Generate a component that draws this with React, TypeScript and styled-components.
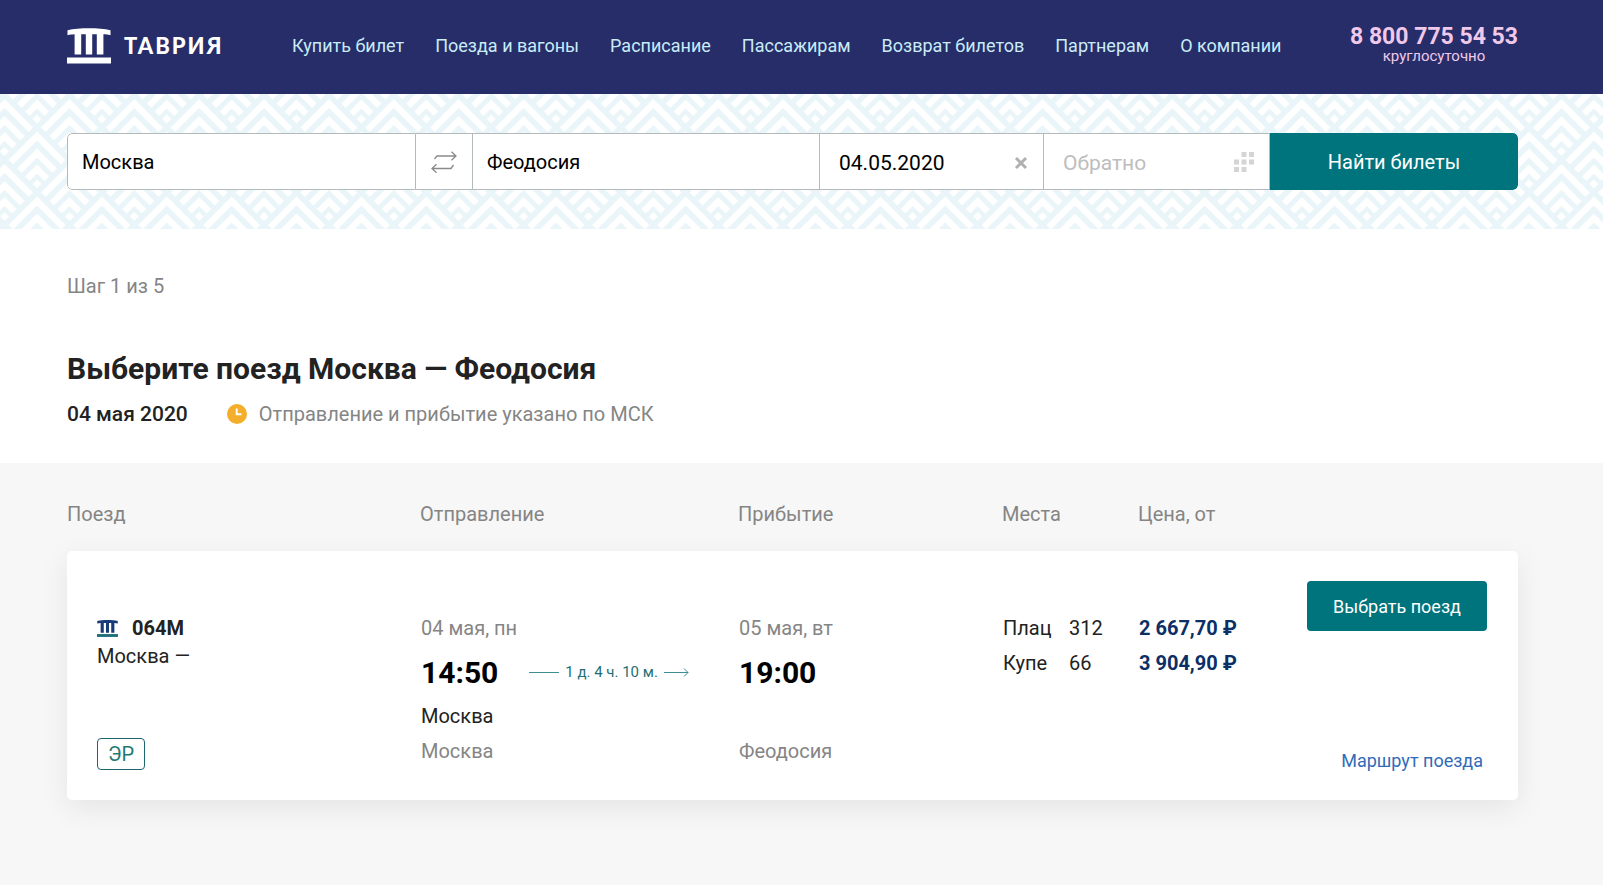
import React, { useId } from "react";
import styled, { createGlobalStyle } from "styled-components";

const GlobalStyle = createGlobalStyle`
  *, *::before, *::after { box-sizing: border-box; }
  html, body { margin: 0; background: #f7f7f7; }
  body { font-family: Roboto, "Liberation Sans", sans-serif; font-size: 20px; color: #222; }
  button, input { font-family: inherit; }
  a { text-decoration: none; }
`;

const teal = "#00747d";
const grey = "#858585";
const gutter = "padding-left: 67px; padding-right: 85px;";

/* ---------- header ---------- */

const Header = styled.header`
  ${gutter}
  display: flex;
  align-items: center;
  justify-content: space-between;
  height: 94px;
  padding-bottom: 3px;
  background: #262d69;
`;

const Brand = styled.a`
  display: flex;
  align-items: center;
  gap: 13px;
  color: #fff;
  font-family: Lato, Roboto, sans-serif;
  font-size: 22px;
  font-weight: 900;
  line-height: 36px;
  letter-spacing: 2px;
`;

const Nav = styled.nav`
  display: flex;
  gap: 31px;
`;

const NavLink = styled.a`
  color: #c9ecf8;
  font-size: 18px;
  line-height: 24px;
  white-space: nowrap;
`;

const Phone = styled.a`
  display: flex;
  flex-direction: column;
  align-items: center;
  margin-bottom: 4px;
  color: #f0c9ea;
  white-space: nowrap;
`;

const PhoneNumber = styled.span`
  font-size: 23px;
  font-weight: 700;
  line-height: 24px;
`;

const PhoneNote = styled.span`
  font-size: 15px;
  line-height: 14px;
`;

/* ---------- search ---------- */

const SearchBand = styled.section`
  ${gutter}
  position: relative;
  padding-top: 39px;
  padding-bottom: 39px;
  background: #fff;
`;

const Ornament = styled.svg`
  position: absolute;
  inset: 0;
  width: 100%;
  height: 100%;
`;

const SearchForm = styled.form`
  position: relative;
  display: grid;
  grid-template-columns: 349fr 57px 347fr 224fr 226fr 248fr;
  height: 57px;
  border-radius: 5px;
  background: #fff;
  overflow: hidden;
`;

const Field = styled.label<{ $first?: boolean; $inset: number }>`
  display: flex;
  align-items: center;
  min-width: 0;
  padding: 0 15px 0 ${(p) => p.$inset}px;
  border: 1px solid #b4bab9;
  border-left-width: ${(p) => (p.$first ? 1 : 0)}px;
  border-radius: ${(p) => (p.$first ? "5px 0 0 5px" : "0")};
`;

const TextInput = styled.input`
  flex: 1;
  min-width: 0;
  padding: 0;
  border: 0;
  outline: 0;
  background: transparent;
  color: #000;
  font-size: 20px;
  line-height: 28px;
  &::placeholder { color: #bdbdbd; opacity: 1; }
`;

const DateInput = styled(TextInput)`
  padding-top: 2px;
  font-size: 21px;
`;

const IconButton = styled.button`
  display: flex;
  align-items: center;
  justify-content: center;
  padding: 0;
  border: 0;
  background: transparent;
  cursor: pointer;
`;

const ClearButton = styled(IconButton)`
  padding-top: 2px;
`;

const SwapButton = styled(IconButton)`
  border: 1px solid #b4bab9;
  border-left: 0;
`;

const SearchButton = styled.button`
  border: 0;
  border-radius: 0 5px 5px 0;
  background: ${teal};
  color: #fff;
  font-size: 20px;
  cursor: pointer;
`;

/* ---------- intro ---------- */

const Intro = styled.section`
  ${gutter}
  padding-top: 43px;
  padding-bottom: 35px;
  background: #fff;
`;

const Step = styled.p`
  margin: 0 0 48px;
  color: ${grey};
  line-height: 28px;
`;

const Title = styled.h1`
  margin: 0 0 10px;
  font-size: 30px;
  font-weight: 700;
  line-height: 42px;
`;

const Summary = styled.div`
  display: flex;
  align-items: center;
  line-height: 28px;
`;

const TravelDate = styled.span`
  margin-right: 39px;
  font-size: 21px;
  font-weight: 500;
`;

const ZoneNote = styled.span`
  display: flex;
  align-items: center;
  gap: 12px;
  color: ${grey};
`;

/* ---------- results ---------- */

const Results = styled.section`
  ${gutter}
  padding-top: 24px;
  padding-bottom: 80px;
`;

const Table = styled.table`
  display: block;
`;

const TableHead = styled.thead`
  display: block;
`;

const TableBody = styled.tbody`
  display: block;
`;

const columns = "grid-template-columns: 353fr 318fr 264fr 136fr 380fr;";

const HeadRow = styled.tr`
  display: grid;
  ${columns}
  padding: 13px 0 23px;
`;

const HeadCell = styled.th`
  padding: 0;
  color: ${grey};
  font-weight: 400;
  line-height: 28px;
  text-align: left;
`;

const TrainRow = styled.tr`
  display: grid;
  ${columns}
  min-height: 249px;
  border-radius: 5px;
  background: #fff;
  box-shadow: 0 8px 30px rgba(0, 0, 0, 0.08);
`;

const Cell = styled.td`
  padding: 60px 0 30px 1px;
  line-height: 35px;
`;

const TrainCell = styled(Cell)`
  display: flex;
  flex-direction: column;
  align-items: flex-start;
  padding-left: 30px;
`;

const TrainName = styled.div`
  display: flex;
  align-items: center;
  gap: 14px;
  font-weight: 700;
`;

const TrainRoute = styled.div`
  line-height: 20px;
`;

const Badge = styled.span`
  margin-top: auto;
  padding: 0 10px;
  border: 1px solid #1b6670;
  border-radius: 4px;
  color: #1f7a72;
  line-height: 30px;
`;

const Muted = styled.div`
  color: ${grey};
`;

const TimeLine = styled.div`
  display: flex;
  align-items: center;
  height: 53px;
`;

const Time = styled.time`
  color: #000;
  font-size: 30px;
  font-weight: 700;
`;

const Duration = styled.span`
  display: flex;
  align-items: center;
  gap: 6px;
  margin-left: 31px;
  color: #1f6f75;
  font-size: 15px;
  white-space: nowrap;
`;

const Station = styled.div`
  min-height: 35px;
`;

const SeatLine = styled.div`
  display: flex;
`;

const SeatClass = styled.span`
  width: 66px;
`;

const Price = styled.div`
  color: #0c2f66;
  font-weight: 700;
`;

const ActionCell = styled(Cell)`
  display: flex;
  justify-content: space-between;
  padding-right: 31px;
`;

const Actions = styled.div`
  display: flex;
  flex-direction: column;
  align-items: flex-end;
  justify-content: space-between;
  margin-top: -30px;
`;

const SelectButton = styled.button`
  width: 180px;
  height: 50px;
  border: 0;
  border-radius: 4px;
  background: ${teal};
  color: #fff;
  font-size: 18px;
  cursor: pointer;
`;

const RouteLink = styled.a`
  padding-right: 4px;
  color: #326bb8;
  font-size: 18px;
  line-height: 18px;
`;

/* ---------- drawings ---------- */

function Temple({ size, main, base }: { size: number; main: string; base: string }) {
  return (
    <svg width={size} height={(size * 36) / 44} viewBox="0 0 44 36" aria-hidden="true">
      <path
        fill={main}
        d="M0.5 2.2C12 -0.4 32 -0.4 43.5 2.2V7.2C41 6.600 39 6.400 36.400 6.200V26.500H29.800V6.200H25.200V26.500H18.800V6.200H14.200V26.500H7.600V6.200C5 6.400 3 6.600 0.500 7.200Z"
      />
      <path fill={base} d="M0 29.500H44V35.500H0Z" />
    </svg>
  );
}

/* One chevron of the ornament, cut off along the lower sides of its rhombus. */
function chevron(cx: number, top: number, start: number) {
  const end = 61;
  const t = 9;
  const outer = (end - start) / 2;
  const inner = Math.max(0, (end - start - t) / 2);
  const yo = top + (start + end) / 2;
  const yi = top + (start + t + end) / 2;
  return `M${cx} ${top + start}L${cx + outer} ${yo}L${cx + inner} ${yi}L${cx} ${top + start + t}L${cx - inner} ${yi}L${cx - outer} ${yo}Z`;
}

function ChevronPattern() {
  const id = useId();
  const w = 64.87;
  const h = 65;
  const cells: [number, number][] = [
    [0, 0], [w, 0], [w / 2, -h / 2], [w / 2, h / 2],
  ];
  const d = cells.flatMap(([x, y]) => [4, 21, 37, 52].map((s) => chevron(x, y, s))).join("");
  return (
    <Ornament aria-hidden="true">
      <defs>
        <pattern id={id} width={w} height={h} x="4.6" y="1" patternUnits="userSpaceOnUse">
          <rect width={w} height={h} fill="#e9f5f8" />
          <path d={d} fill="#fff" />
        </pattern>
      </defs>
      <rect width="100%" height="100%" fill={`url(#${id})`} />
    </Ornament>
  );
}

function SwapIcon() {
  return (
    <svg width="26" height="22" viewBox="0 0 26 22" fill="none" stroke="#8a8a8a" strokeWidth="1.3" aria-hidden="true">
      <path d="M3.500 8L6 5H25M20.500 0.800L25 5L20.500 9.200" />
      <path d="M22.500 14L20 17.500H1M5.500 13.300L1 17.500L5.500 21.700" />
    </svg>
  );
}

function ClearIcon() {
  return (
    <svg width="14" height="14" viewBox="0 0 14 14" stroke="#b0b0b0" strokeWidth="3" aria-hidden="true">
      <path d="M2 2L12 12M12 2L2 12" />
    </svg>
  );
}

function CalendarIcon() {
  return (
    <svg width="20" height="20" viewBox="0 0 20 20" fill="#d4d4d4" aria-hidden="true">
      <path d="M7.500 0h5v5h-5zM15 0h5v5h-5zM0 7.500h5v5H0zM7.500 7.500h5v5h-5zM15 7.500h5v5h-5zM0 15h5v5H0zM7.500 15h5v5h-5z" />
    </svg>
  );
}

function ClockIcon() {
  return (
    <svg width="20" height="20" viewBox="0 0 20 20" aria-hidden="true">
      <circle cx="10" cy="10" r="10" fill="#f3ae2b" />
      <path d="M9.700 4.500V10.300H14.500" fill="none" stroke="#fff" strokeWidth="2" />
    </svg>
  );
}

/* ---------- page ---------- */

const menu = [
  "Купить билет",
  "Поезда и вагоны",
  "Расписание",
  "Пассажирам",
  "Возврат билетов",
  "Партнерам",
  "О компании",
];

const headings = ["Поезд", "Отправление", "Прибытие", "Места", "Цена, от"];

const seats = [
  { kind: "Плац", count: 312, price: "2 667,70 ₽" },
  { kind: "Купе", count: 66, price: "3 904,90 ₽" },
];

export default function App() {
  return (
    <>
      <GlobalStyle />
      <Header>
        <Brand href="#">
          <Temple size={44} main="#fff" base="#fff" />
          ТАВРИЯ
        </Brand>
        <Nav>
          {menu.map((item) => (
            <NavLink href="#" key={item}>{item}</NavLink>
          ))}
        </Nav>
        <Phone href="tel:88007755453">
          <PhoneNumber>8 800 775 54 53</PhoneNumber>
          <PhoneNote>круглосуточно</PhoneNote>
        </Phone>
      </Header>

      <SearchBand>
        <ChevronPattern />
        <SearchForm onSubmit={(e) => e.preventDefault()}>
          <Field $first $inset={14}>
            <TextInput aria-label="Откуда" defaultValue="Москва" />
          </Field>
          <SwapButton type="button" aria-label="Поменять местами">
            <SwapIcon />
          </SwapButton>
          <Field $inset={14}>
            <TextInput aria-label="Куда" defaultValue="Феодосия" />
          </Field>
          <Field $inset={19}>
            <DateInput aria-label="Дата отправления" defaultValue="04.05.2020" />
            <ClearButton type="button" aria-label="Очистить дату">
              <ClearIcon />
            </ClearButton>
          </Field>
          <Field $inset={19}>
            <DateInput aria-label="Дата возвращения" placeholder="Обратно" />
            <CalendarIcon />
          </Field>
          <SearchButton type="submit">Найти билеты</SearchButton>
        </SearchForm>
      </SearchBand>

      <main>
        <Intro>
          <Step>Шаг 1 из 5</Step>
          <Title>Выберите поезд Москва — Феодосия</Title>
          <Summary>
            <TravelDate>04 мая 2020</TravelDate>
            <ZoneNote>
              <ClockIcon />
              Отправление и прибытие указано по МСК
            </ZoneNote>
          </Summary>
        </Intro>

        <Results>
          <Table>
            <TableHead>
              <HeadRow>
                {headings.map((h) => (
                  <HeadCell key={h} scope="col">{h}</HeadCell>
                ))}
              </HeadRow>
            </TableHead>
            <TableBody>
              <TrainRow>
                <TrainCell>
                  <TrainName>
                    <Temple size={21} main="#173a78" base="#1c6e78" />
                    064М
                  </TrainName>
                  <TrainRoute>Москва —</TrainRoute>
                  <Badge>ЭР</Badge>
                </TrainCell>
                <Cell>
                  <Muted>04 мая, пн</Muted>
                  <TimeLine>
                    <Time>14:50</Time>
                    <Duration>
                      <svg width="30" height="9" viewBox="0 0 30 9" stroke="#3d8d94" aria-hidden="true">
                        <path d="M0 4.500H30" />
                      </svg>
                      1 д. 4 ч. 10 м.
                      <svg width="25" height="9" viewBox="0 0 25 9" fill="none" stroke="#3d8d94" aria-hidden="true">
                        <path d="M0 4.500H24M20 0.500L24 4.500L20 8.500" />
                      </svg>
                    </Duration>
                  </TimeLine>
                  <Station>Москва</Station>
                  <Muted>Москва</Muted>
                </Cell>
                <Cell>
                  <Muted>05 мая, вт</Muted>
                  <TimeLine>
                    <Time>19:00</Time>
                  </TimeLine>
                  <Station />
                  <Muted>Феодосия</Muted>
                </Cell>
                <Cell>
                  {seats.map((s) => (
                    <SeatLine key={s.kind}>
                      <SeatClass>{s.kind}</SeatClass>
                      <span>{s.count}</span>
                    </SeatLine>
                  ))}
                </Cell>
                <ActionCell>
                  <div>
                    {seats.map((s) => (
                      <Price key={s.kind}>{s.price}</Price>
                    ))}
                  </div>
                  <Actions>
                    <SelectButton type="button">Выбрать поезд</SelectButton>
                    <RouteLink href="#">Маршрут поезда</RouteLink>
                  </Actions>
                </ActionCell>
              </TrainRow>
            </TableBody>
          </Table>
        </Results>
      </main>
    </>
  );
}
